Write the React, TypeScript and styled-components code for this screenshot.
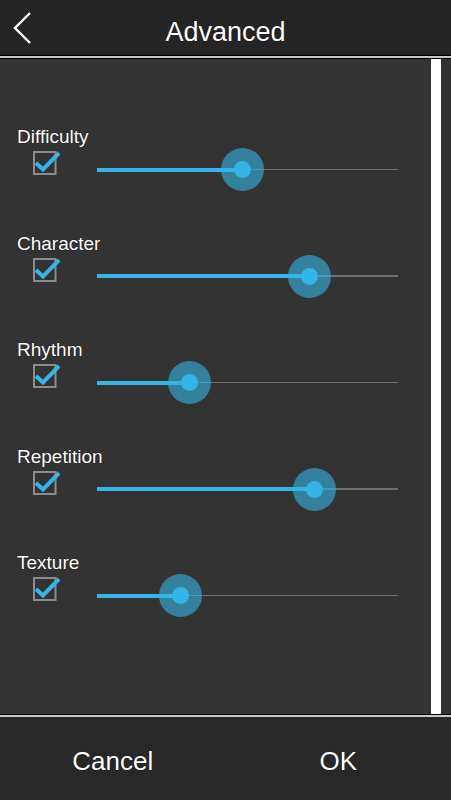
import React from "react";
import styled, { createGlobalStyle } from "styled-components";

const Global = createGlobalStyle`
  html, body { margin: 0; padding: 0; background: #333333; }
  body { font-family: "Liberation Sans", Arial, sans-serif; }
  * { box-sizing: border-box; }
`;

const Screen = styled.div`
  width: 451px;
  height: 800px;
  display: flex;
  flex-direction: column;
  background: #333333;
  overflow: hidden;
`;

const Header = styled.header`
  height: 59px;
  flex: none;
  background: #252525;
  border-bottom: 1px solid #000;
  box-shadow: inset 0 -2px 0 #c8c8c8, inset 0 -3px 0 #000;
  position: relative;
  display: flex;
  justify-content: center;
  align-items: flex-start;
  padding-top: 17px;
`;

const BackButton = styled.button`
  position: absolute;
  left: 13px;
  top: 11px;
  width: 20px;
  height: 34px;
  padding: 0;
  border: 0;
  background: none;
  display: flex;
`;

const Title = styled.h1`
  margin: 0;
  color: #ffffff;
  font-size: 27px;
  line-height: 31px;
  font-weight: 400;
  text-shadow: 0 0 1px #000;
`;

const Body = styled.main`
  flex: 1;
  display: flex;
  min-height: 0;
`;

const Panel = styled.section`
  width: 431px;
  background: #333333;
  padding: 67px 0 0 0;
  display: flex;
  flex-direction: column;
`;

const ScrollBar = styled.div`
  width: 10px;
  background: #ffffff;
`;

const Gutter = styled.div`
  flex: 1;
  background: #323232;
`;

const Row = styled.div`
  height: 106.5px;
  flex: none;
  display: flex;
  flex-direction: column;
`;

const Label = styled.div`
  padding-left: 17px;
  color: #ffffff;
  font-size: 19px;
  line-height: 22px;
  text-shadow: 0 0 1px #000;
`;

const Controls = styled.div`
  display: flex;
  align-items: flex-start;
`;

const CheckBox = styled.svg`
  margin-left: 32px;
  margin-top: 1px;
  flex: none;
`;

const Slider = styled.div`
  position: relative;
  margin-left: 35px;
  width: 301px;
  height: 43px;
`;

const Track = styled.div`
  position: absolute;
  left: 0;
  right: 0;
  top: 20.5px;
  height: 1.5px;
  background: #6f6f6f;
`;

const Fill = styled.div`
  position: absolute;
  left: 0;
  top: 19.5px;
  height: 4px;
  background: #33b5e5;
`;

const Thumb = styled.div`
  position: absolute;
  top: 0;
  width: 43px;
  height: 43px;
  margin-left: -21.5px;
  border-radius: 50%;
  background: rgba(51, 181, 229, 0.6);
  display: flex;
  align-items: center;
  justify-content: center;
  &::after {
    content: "";
    width: 17px;
    height: 17px;
    border-radius: 50%;
    background: #33b5e5;
  }
`;

const Footer = styled.footer`
  height: 86px;
  flex: none;
  background: #282828;
  border-top: 1px solid #000;
  box-shadow: inset 0 2px 0 #c8c8c8;
  display: grid;
  grid-template-columns: 1fr 1fr;
  padding-top: 31px;
`;

const FooterButton = styled.button`
  border: 0;
  background: none;
  padding: 0;
  height: 30px;
  color: #ffffff;
  font-family: "Liberation Sans", Arial, sans-serif;
  font-size: 26px;
  line-height: 30px;
  text-shadow: 0 0 1px #000;
`;

const items = [
  { label: "Difficulty", value: 48.5 },
  { label: "Character", value: 70.5 },
  { label: "Rhythm", value: 30.6 },
  { label: "Repetition", value: 72.1 },
  { label: "Texture", value: 27.6 },
];

function Check() {
  return (
    <CheckBox width="30" height="28" viewBox="0 0 30 28">
      <rect x="2" y="3" width="21.5" height="22" fill="none" stroke="#8c8c8c" strokeWidth="2" />
      <polyline
        points="4,14 11,20.5 27,4"
        fill="none"
        stroke="#33b5e5"
        strokeWidth="4"
      />
    </CheckBox>
  );
}

export default function App() {
  return (
    <>
      <Global />
      <Screen>
        <Header>
          <BackButton aria-label="Back">
            <svg width="20" height="34" viewBox="0 0 20 34">
              <polyline points="17,2 2,17 17,32" fill="none" stroke="#ffffff" strokeWidth="2.4" />
            </svg>
          </BackButton>
          <Title>Advanced</Title>
        </Header>
        <Body>
          <Panel>
            {items.map((it) => (
              <Row key={it.label}>
                <Label>{it.label}</Label>
                <Controls>
                  <Check />
                  <Slider>
                    <Track />
                    <Fill style={{ width: `${it.value}%` }} />
                    <Thumb style={{ left: `${it.value}%` }} />
                  </Slider>
                </Controls>
              </Row>
            ))}
          </Panel>
          <ScrollBar />
          <Gutter />
        </Body>
        <Footer>
          <FooterButton>Cancel</FooterButton>
          <FooterButton>OK</FooterButton>
        </Footer>
      </Screen>
    </>
  );
}
